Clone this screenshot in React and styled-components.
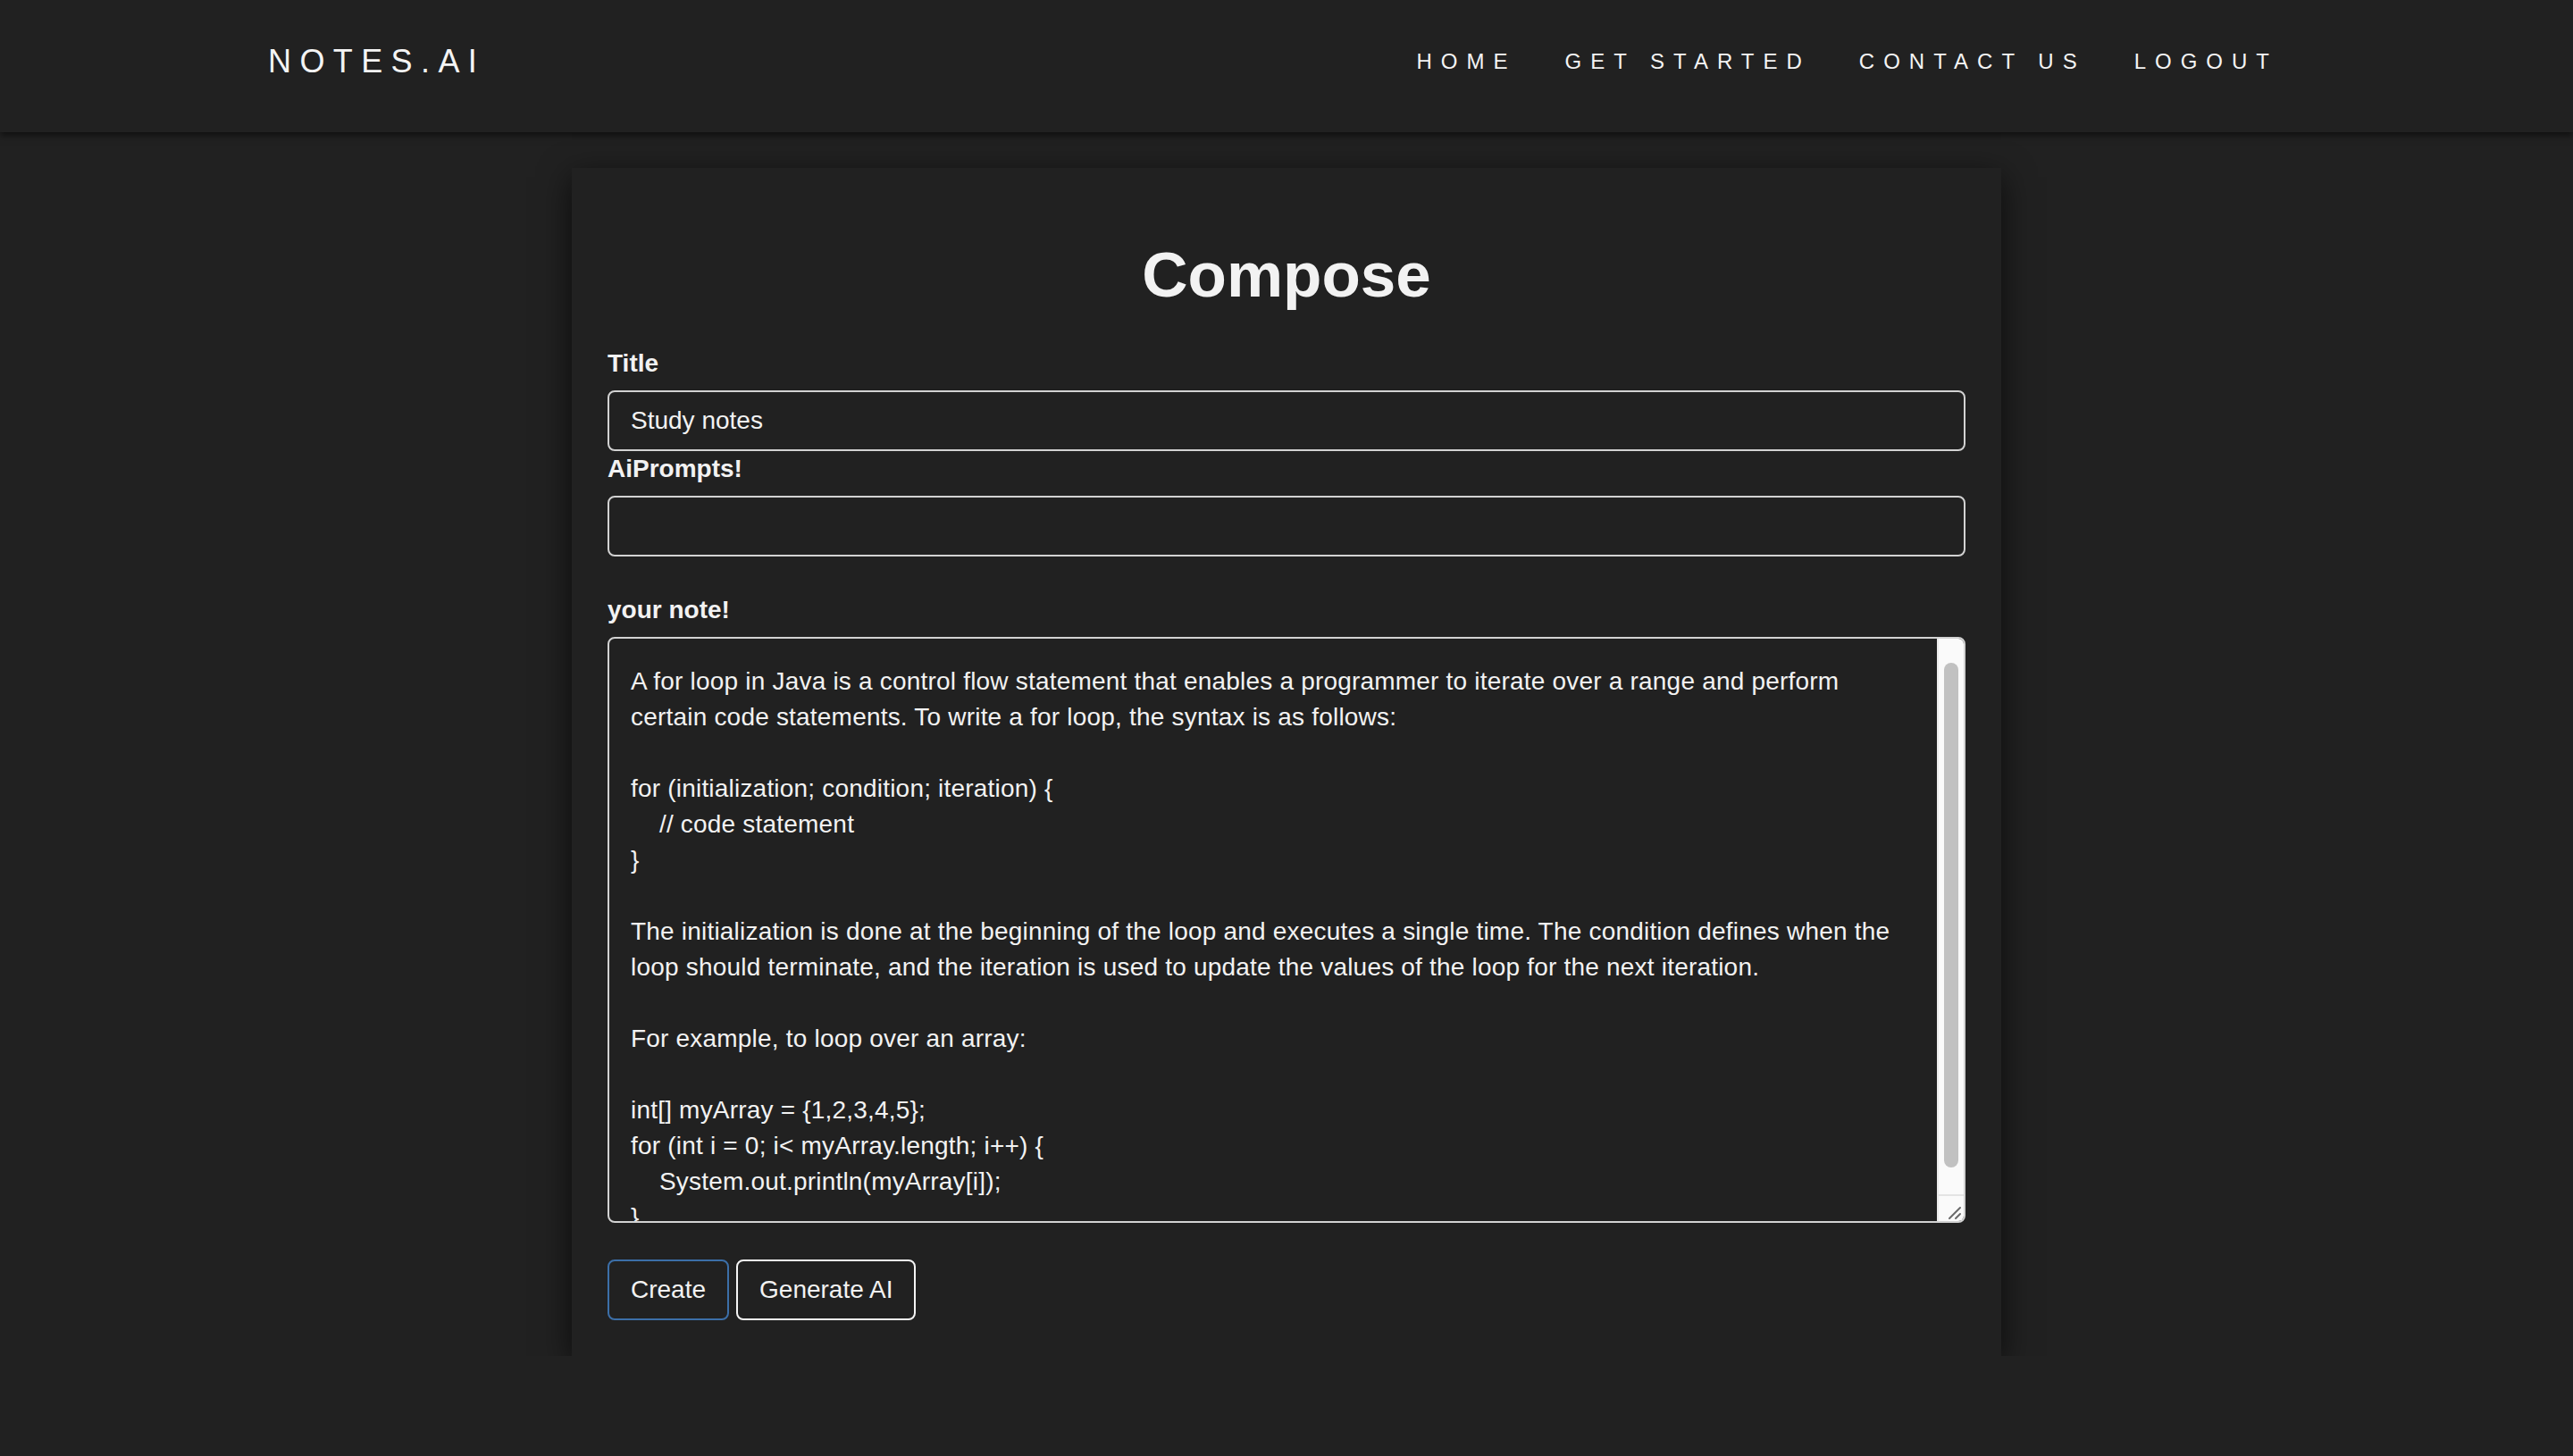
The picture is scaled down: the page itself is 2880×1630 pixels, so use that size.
import React from 'react';
import styled, { createGlobalStyle } from 'styled-components';

const GlobalStyle = createGlobalStyle`
    html, body {
        margin: 0;
        padding: 0;
        background: #212121;
        color: #f2f2f2;
        font-family: "Liberation Sans", Arial, sans-serif;
    }
    * {
        box-sizing: border-box;
    }
`;

const Header = styled.header`
    height: 148px;
    background: #212121;
    box-shadow: 0 3px 8px rgba(0, 0, 0, 0.6);
    position: relative;
    z-index: 2;
`;
const HeaderInner = styled.div`
    width: 2340px;
    margin: 0 auto;
    padding: 48px 30px 0;
    display: flex;
    justify-content: space-between;
    align-items: flex-start;
`;
const Logo = styled.div`
    font-size: 36px;
    letter-spacing: 9.4px;
    line-height: normal;
    color: #f4f4f4;
`;
const Nav = styled.nav`
    display: flex;
    gap: 54px;
    margin-top: 7px;
    margin-right: 30px;
`;
const NavLink = styled.a`
    font-size: 24px;
    letter-spacing: 10px;
    line-height: normal;
    color: #f4f4f4;
    text-decoration: none;
`;

const Card = styled.main`
    width: 1600px;
    margin: 40px auto 0;
    padding: 40px;
    background: #212121;
    box-shadow: 0 10px 34px rgba(0, 0, 0, 0.65);
`;
const Heading = styled.h1`
    margin: 40px 0 40px;
    font-size: 71px;
    line-height: 79px;
    font-weight: bold;
    text-align: center;
    color: #f2f2f2;
`;
const Label = styled.label`
    display: block;
    font-size: 28px;
    line-height: 40px;
    font-weight: bold;
    margin: ${p => (p.$spaced ? '40px' : '0')} 0 10px;
`;
const Input = styled.input`
    display: block;
    width: 100%;
    height: 68px;
    padding: 12px 24px;
    font: inherit;
    font-size: 28px;
    color: #f2f2f2;
    background: #212121;
    border: 2px solid #d2d2d2;
    border-radius: 8px;
    outline: none;
`;
const NoteBox = styled.div`
    position: relative;
    height: 656px;
`;
const NoteArea = styled.textarea`
    display: block;
    width: 100%;
    height: 100%;
    padding: 28px 60px 12px 24px;
    font: inherit;
    font-size: 28px;
    line-height: 40px;
    letter-spacing: 0.2px;
    color: #f2f2f2;
    background: #212121;
    border: 2px solid #d2d2d2;
    border-radius: 8px;
    outline: none;
    resize: none;
    overflow: hidden;
`;
// drawn scrollbar that sits over the textarea's right edge
const ScrollTrack = styled.div`
    position: absolute;
    top: 2px;
    right: 2px;
    bottom: 2px;
    width: 30px;
    background: #fafafa;
    border-left: 2px solid #ebebeb;
    border-radius: 0 6px 6px 0;
`;
const ScrollThumb = styled.div`
    position: absolute;
    top: 27px;
    left: 6px;
    width: 16px;
    height: 565px;
    border-radius: 8px;
    background: #c1c1c1;
`;
const ScrollCorner = styled.div`
    position: absolute;
    left: 0;
    right: 0;
    bottom: 0;
    height: 30px;
    border-top: 2px solid #e4e4e4;
    svg {
        position: absolute;
        right: 2px;
        bottom: 1px;
    }
`;
const Actions = styled.div`
    display: flex;
    gap: 8px;
    margin-top: 41px;
`;
const Button = styled.button`
    height: 68px;
    padding: 12px 24px;
    font: inherit;
    font-size: 28px;
    line-height: 40px;
    color: #f2f2f2;
    background: transparent;
    border: 2px solid ${p => (p.$focused ? '#3c6fa8' : '#f4f4f4')};
    border-radius: 8px;
    cursor: pointer;
`;

const note = `A for loop in Java is a control flow statement that enables a programmer to iterate over a range and perform certain code statements. To write a for loop, the syntax is as follows:

for (initialization; condition; iteration) {
    // code statement
}

The initialization is done at the beginning of the loop and executes a single time. The condition defines when the loop should terminate, and the iteration is used to update the values of the loop for the next iteration.

For example, to loop over an array:

int[] myArray = {1,2,3,4,5};
for (int i = 0; i< myArray.length; i++) {
    System.out.println(myArray[i]);
}`;

const links = ['HOME', 'GET STARTED', 'CONTACT US', 'LOGOUT'];

export default function App() {
    return <>
        <GlobalStyle />
        <Header>
            <HeaderInner>
                <Logo>NOTES.AI</Logo>
                <Nav>
                    {links.map(l => <NavLink key={l} href="#">{l}</NavLink>)}
                </Nav>
            </HeaderInner>
        </Header>

        <Card>
            <Heading>Compose</Heading>
            <form onSubmit={e => e.preventDefault()}>
                <Label htmlFor="title">Title</Label>
                <Input id="title" name="title" defaultValue="Study notes" />
                <Label htmlFor="prompt">AiPrompts!</Label>
                <Input id="prompt" name="prompt" />
                <Label $spaced htmlFor="content">your note!</Label>
                <NoteBox>
                    <NoteArea id="content" name="content" defaultValue={note} />
                    <ScrollTrack>
                        <ScrollThumb />
                        <ScrollCorner>
                            <svg width="16" height="16" viewBox="0 0 16 16">
                                <path d="M14 2 L2 14 M14 9 L9 14" stroke="#6b6b6b" strokeWidth="2" strokeLinecap="round" />
                            </svg>
                        </ScrollCorner>
                    </ScrollTrack>
                </NoteBox>
                <Actions>
                    <Button $focused type="submit">Create</Button>
                    <Button type="button">Generate AI</Button>
                </Actions>
            </form>
        </Card>
    </>;
}
